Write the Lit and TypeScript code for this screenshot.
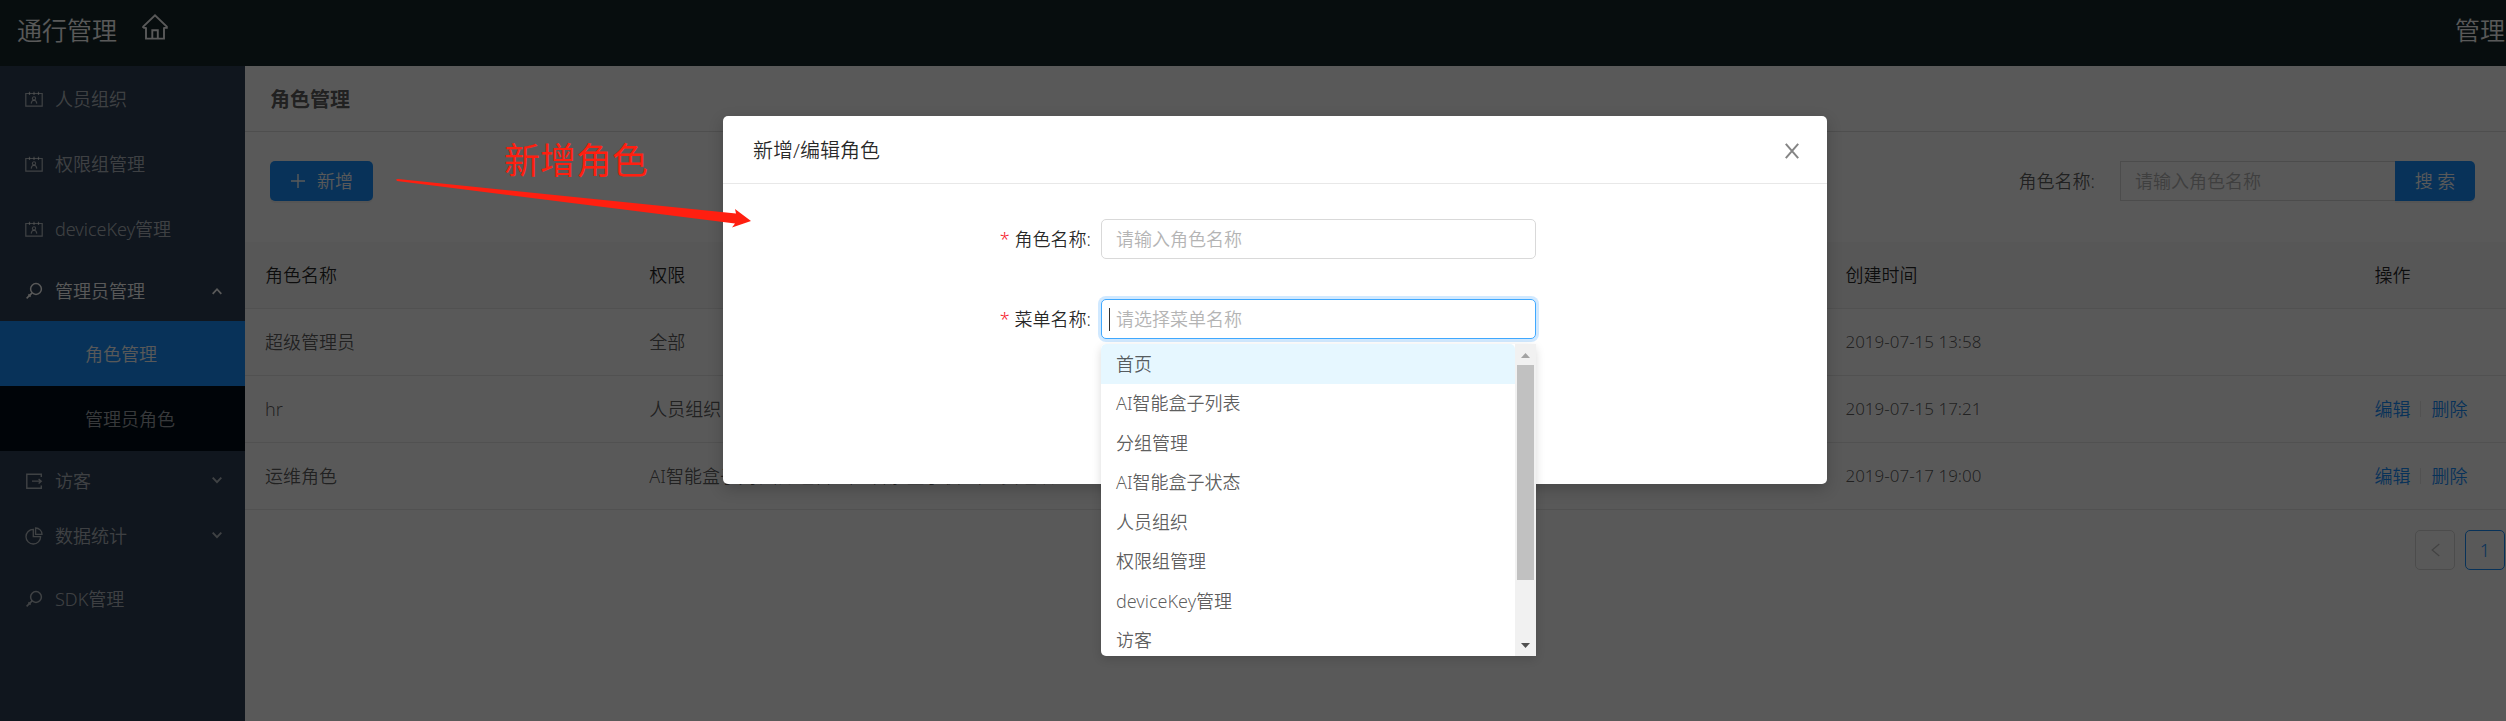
import { LitElement, html, css, svg, nothing } from "lit";
import { customElement } from "lit/decorators.js";
import { classMap } from "lit/directives/class-map.js";

const stroke = (body: unknown, cls = "icon") => html`
  <svg class=${cls} viewBox="0 0 18 18" fill="none" stroke="currentColor" aria-hidden="true">${body}</svg>
`;

const icons = {
  idcard: () => stroke(svg`
    <path d="M.8 3.5H17.2V16.2H.8Z" stroke-width="1.2"/>
    <path d="M4.5 1.8V5M9 1.8V5M13.5 1.8V5" stroke-width="1.2"/>
    <circle cx="9" cy="8.4" r="1.6" stroke-width="1.1"/>
    <path d="M6.2 13.6C6.4 11.2 7.6 10.3 9 10.3S11.6 11.2 11.8 13.6" stroke-width="1.1"/>`),
  key: () => stroke(svg`
    <circle cx="11" cy="7" r="5.4" stroke-width="1.5"/>
    <path d="M7.1 10.9L1.6 16.4M3.4 12.4L5.6 14.6" stroke-width="1.5"/>`),
  exit: () => stroke(svg`
    <path d="M16.3 5V2.2H1.8V16.2H16.3V13.4" stroke-width="1.4"/>
    <path d="M7 9.2H16M13.6 6.9L16.3 9.2L13.6 11.5" stroke-width="1.3"/>`),
  pie: () => stroke(svg`
    <path d="M8.3 2.4A7.3 7.3 0 1 0 15.6 9.7H8.3Z" stroke-width="1.3"/>
    <path d="M10.6 1A6.4 6.4 0 0 1 17 7.4H10.6Z" stroke-width="1.3"/>`),
};

interface Entry {
  label: string;
  icon: keyof typeof icons;
  open?: boolean;
  group?: boolean;
  children?: { label: string; active?: boolean }[];
}

const menu: Entry[] = [
  { label: "人员组织", icon: "idcard" },
  { label: "权限组管理", icon: "idcard" },
  { label: "deviceKey管理", icon: "idcard" },
  {
    label: "管理员管理", icon: "key", group: true, open: true,
    children: [{ label: "角色管理", active: true }, { label: "管理员角色" }],
  },
  { label: "访客", icon: "exit", group: true },
  { label: "数据统计", icon: "pie", group: true },
  { label: "SDK管理", icon: "key" },
];

const roles = [
  { name: "超级管理员", access: "全部", time: "2019-07-15 13:58", editable: false },
  { name: "hr", access: "人员组织", time: "2019-07-15 17:21", editable: true },
  { name: "运维角色", access: "AI智能盒子列表,分组管理,AI智能盒子状态,人员组织", time: "2019-07-17 19:00", editable: true },
];

const options = ["首页", "AI智能盒子列表", "分组管理", "AI智能盒子状态", "人员组织", "权限组管理", "deviceKey管理", "访客"];

const base = css`
  * { box-sizing: border-box; }
  a { color: inherit; text-decoration: none; }
  button, input { font: inherit; margin: 0; }
  input::placeholder { color: #b4b4b4; opacity: 1; }
`;

@customElement("side-menu")
class SideMenu extends LitElement {
  static styles = [base, css`
    :host { display: block; background: #304156; color: rgba(255, 255, 255, 0.65); }
    .list { margin: 0; padding: 0; list-style: none; }
    .link { display: flex; align-items: center; gap: 12px; height: 65px; padding: 0 23px 0 25px; }
    .icon { width: 18px; height: 18px; flex: none; }
    .group { width: 100%; height: 50px; margin: 5px 0 0; border: 0; background: none; color: inherit; text-align: left; }
    .group.open { margin-bottom: 5px; color: #fff; }
    .last { margin-bottom: 5px; }
    .label { flex: 1; }
    .chevron { width: 10px; height: 10px; }
    .sub { background: #000c17; }
    .child { display: flex; align-items: center; height: 65px; padding-left: 85px; }
    .active { background: #1890ff; color: #fff; }
  `];

  render() {
    return html`<nav aria-label="主菜单"><ul class="list">${menu.map((m) => this.entry(m))}</ul></nav>`;
  }

  private entry(m: Entry) {
    if (!m.group) {
      return html`<li><a class="link" href="#">${icons[m.icon]()}<span class="label">${m.label}</span></a></li>`;
    }
    return html`<li>
      <button class=${classMap({ link: true, group: true, open: !!m.open, last: m.icon === "pie" })} type="button" aria-expanded=${m.open ? "true" : "false"}>
        ${icons[m.icon]()}<span class="label">${m.label}</span>
        <svg class="chevron" viewBox="0 0 10 10" fill="none" stroke="currentColor" stroke-width="1.8" aria-hidden="true">
          <path d=${m.open ? "M.7 7.8L5 3.2L9.3 7.8" : "M.7 1.6L5 6.2L9.3 1.6"} />
        </svg>
      </button>
      ${m.children
        ? html`<ul class="list sub">${m.children.map((c) => html`
            <li><a class=${classMap({ child: true, active: !!c.active })} href="#">${c.label}</a></li>`)}</ul>`
        : nothing}
    </li>`;
  }
}

@customElement("role-table")
class RoleTable extends LitElement {
  static styles = [base, css`
    :host { display: block; }
    .table { width: 100%; table-layout: fixed; border-collapse: separate; border-spacing: 0; }
    .name { width: 17%; }
    .access { width: 52.9%; }
    .time { width: 23.4%; }
    .table th, .table td { height: 67px; padding: 0 20px; border-bottom: 1px solid #e8e8e8; text-align: left; white-space: nowrap; font-weight: inherit; }
    .table th { background: #fafafa; color: rgba(0, 0, 0, 0.85); }
    .table .when { font-size: 17px; }
    .table .acts { padding-right: 0; }
    .ops { display: flex; align-items: center; gap: 10px; color: #1890ff; }
    .bar { width: 1px; height: 16px; background: #e8e8e8; }
    .pager { display: flex; justify-content: flex-end; gap: 10px; padding: 20px 1px; }
    .page { display: grid; place-items: center; width: 40px; height: 40px; padding: 0; border: 1px solid #d9d9d9; border-radius: 5px; background: #fff; color: rgba(0, 0, 0, 0.25); }
    .current { border-color: #1890ff; color: #1890ff; }
    .arrow { width: 9px; height: 14px; }
  `];

  render() {
    return html`
      <table class="table">
        <colgroup><col class="name" /><col class="access" /><col class="time" /><col /></colgroup>
        <thead><tr><th>角色名称</th><th>权限</th><th>创建时间</th><th>操作</th></tr></thead>
        <tbody>${roles.map((r) => html`<tr>
          <td>${r.name}</td><td>${r.access}</td><td class="when">${r.time}</td>
          <td class="acts">${r.editable
            ? html`<div class="ops"><a href="#">编辑</a><span class="bar"></span><a href="#">删除</a></div>`
            : nothing}</td>
        </tr>`)}</tbody>
      </table>
      <div class="pager">
        <button class="page" type="button" aria-label="上一页" disabled>
          <svg class="arrow" viewBox="0 0 9 14" fill="none" stroke="currentColor" stroke-width="1.3"><path d="M8.3 1L1.2 7L8.3 13" /></svg>
        </button>
        <button class="page current" type="button">1</button>
      </div>`;
  }
}

@customElement("role-dialog")
class RoleDialog extends LitElement {
  static styles = [base, css`
    :host { display: block; width: 1104px; max-width: 90%; }
    .dialog { background: #fff; border-radius: 5px; box-shadow: 0 5px 15px rgba(0, 0, 0, 0.2); }
    .head { display: flex; align-items: center; justify-content: space-between; height: 68px; padding: 2px 28px 0 30px; border-bottom: 1px solid #e8e8e8; }
    .title { margin: 0; font-size: 20px; font-weight: inherit; color: rgba(0, 0, 0, 0.85); }
    .close { display: flex; padding: 0; border: 0; background: none; color: #858585; }
    .cross { width: 14px; height: 16px; }
    .form { display: grid; gap: 40px; padding: 35px 30px 145px; }
    .row { display: grid; grid-template-columns: 8fr 10fr 6fr; align-items: center; color: rgba(0, 0, 0, 0.85); }
    .label { display: flex; justify-content: flex-end; gap: 5px; padding-right: 10px; }
    .star { color: #f5222d; }
    .field { position: relative; }
    .input { display: block; width: 100%; height: 40px; padding: 0 14px; border: 1px solid #d9d9d9; border-radius: 5px; outline: 0; background: #fff; color: rgba(0, 0, 0, 0.65); }
    .focused { border-color: #40a9ff; box-shadow: 0 0 0 3px rgba(24, 144, 255, 0.2); }
    .caret { position: absolute; left: 8px; top: 9px; width: 1px; height: 23px; background: #333; }
    .drop { position: absolute; top: 45px; left: 0; width: 100%; height: 312px; display: flex; overflow: hidden; border-radius: 5px 0 0 5px; background: #fff; }
    .shade { position: absolute; top: 45px; left: 0; width: 100%; height: 312px; border-radius: 5px; box-shadow: 0 3px 10px rgba(0, 0, 0, 0.15); }
    .options { flex: 1; display: grid; grid-auto-rows: 1fr; height: 316px; margin: 0; padding: 0; list-style: none; color: rgba(0, 0, 0, 0.65); }
    .option { display: flex; align-items: center; padding: 0 15px; }
    .hover { background: #e6f7ff; border-radius: 5px 5px 0 0; }
    .scroll { display: flex; flex-direction: column; align-items: center; width: 21px; background: #f1f1f1; }
    .tip { width: 21px; height: 21px; flex: none; }
    .thumb { width: 17px; height: 215px; background: #c1c1c1; }
    .rest { flex: 1; }
  `];

  render() {
    return html`
      <section class="dialog" role="dialog" aria-labelledby="title">
        <header class="head">
          <h2 class="title" id="title">新增/编辑角色</h2>
          <button class="close" type="button" aria-label="关闭">
            <svg class="cross" viewBox="0 0 14 16" fill="none" stroke="currentColor" stroke-width="2"><path d="M.8 .8L13.2 15.2M13.2 .8L.8 15.2" /></svg>
          </button>
        </header>
        <form class="form">
          <div class="row">
            <label class="label" for="name"><span class="star">*</span><span>角色名称:</span></label>
            <div class="field"><input class="input" id="name" type="text" placeholder="请输入角色名称" /></div>
          </div>
          <div class="row">
            <label class="label" for="menu"><span class="star">*</span><span>菜单名称:</span></label>
            <div class="field">
              <input class="input focused" id="menu" type="text" role="combobox" aria-expanded="true" aria-controls="options" placeholder="请选择菜单名称" />
              <span class="caret"></span>
              <div class="shade"></div>
              <div class="drop">
                <ul class="options" id="options" role="listbox">
                  ${options.map((o, i) => html`<li class=${classMap({ option: true, hover: i === 0 })} role="option">${o}</li>`)}
                </ul>
                <div class="scroll" aria-hidden="true">
                  <svg class="tip" viewBox="0 0 21 21"><path d="M6 14L10.5 9L15 14Z" fill="#a3a3a3" /></svg>
                  <div class="thumb"></div>
                  <div class="rest"></div>
                  <svg class="tip" viewBox="0 0 21 21"><path d="M6 8L10.5 13L15 8Z" fill="#505050" /></svg>
                </div>
              </div>
            </div>
          </div>
        </form>
      </section>`;
  }
}

@customElement("app-root")
class AppRoot extends LitElement {
  static styles = [base, css`
    :host {
      display: block; position: relative; min-height: 100vh; overflow: hidden; background: #fff;
      font: 350 18px/26px "Noto Sans", "Noto Sans CJK SC", sans-serif; color: rgba(0, 0, 0, 0.65);
    }
    .shell { display: grid; grid-template: 66px 1fr / 245px minmax(0, 1fr); min-height: 100vh; }
    .top { grid-column: 1 / -1; display: flex; align-items: center; gap: 25px; padding: 0 1px 6px 17px; background: #142529; color: #fff; }
    .brand { font-size: 25px; }
    .home { width: 26px; height: 26px; margin-bottom: 6px; }
    .user { margin-left: auto; font-size: 25px; }
    .heading { display: flex; align-items: center; height: 66px; margin: 0; padding: 2px 0 0 25px; border-bottom: 1px solid #e0e0e0; font-size: 20px; font-weight: 700; }
    .tools { display: flex; align-items: center; justify-content: space-between; padding: 29px 31px 41px 25px; }
    .primary { display: flex; align-items: center; justify-content: center; height: 40px; padding: 0 20px; border: 0; border-radius: 5px; background: #1890ff; color: #fff; white-space: pre; box-shadow: 0 2px 0 rgba(0, 0, 0, 0.05); }
    .add { gap: 11px; }
    .plus { width: 16px; height: 16px; }
    .search { display: flex; align-items: center; }
    .caption { margin-right: 25px; }
    .query { width: 275px; height: 40px; padding: 0 14px; border: 1px solid #d9d9d9; border-right: 0; background: #fff; }
    .go { width: 80px; padding: 0; border-radius: 0 5px 5px 0; }
    .mask { position: absolute; inset: 0; display: flex; flex-direction: column; align-items: center; padding: 116px 0 0 44px; background: rgba(0, 0, 0, 0.65); }
    .note { position: absolute; left: 396px; top: 134px; width: 356px; color: #ff1f10; }
    .words { margin: 0; padding-left: 108px; font-size: 36px; line-height: 54px; font-weight: 400; }
    .pointer { position: absolute; left: 0; top: 44px; width: 356px; height: 50px; }
  `];

  render() {
    return html`
      <div class="shell">
        <header class="top">
          <span class="brand">通行管理</span>
          <svg class="home" viewBox="0 0 26 26" fill="none" stroke="currentColor" stroke-width="1.9" aria-hidden="true">
            <path d="M4 13.5V24.6H22V13.5M1.2 13.9V12.6L13 1.4L24.8 12.6V13.9H21.6M1.2 13.9H4.4M10.3 24.5V16.2H15.8V24.5" />
          </svg>
          <span class="user">管理</span>
        </header>
        <side-menu></side-menu>
        <main>
          <h1 class="heading">角色管理</h1>
          <div class="tools">
            <button class="primary add" type="button">
              <svg class="plus" viewBox="0 0 16 16" stroke="currentColor" stroke-width="1.4" aria-hidden="true"><path d="M8 1V15M1 8H15" /></svg>
              <span>新增</span>
            </button>
            <form class="search">
              <label class="caption" for="query">角色名称:</label>
              <input class="query" id="query" type="text" placeholder="请输入角色名称" />
              <button class="primary go" type="button">搜 索</button>
            </form>
          </div>
          <role-table></role-table>
        </main>
      </div>
      <div class="mask"><role-dialog></role-dialog></div>
      <div class="note">
        <p class="words">新增角色</p>
        <svg class="pointer" viewBox="0 0 356 50" fill="currentColor" aria-hidden="true">
          <path d="M0 1.4L2 1L340 35.5L339 31L355 43L336 49.4L339 45.5L1 3Z" />
        </svg>
      </div>`;
  }
}
